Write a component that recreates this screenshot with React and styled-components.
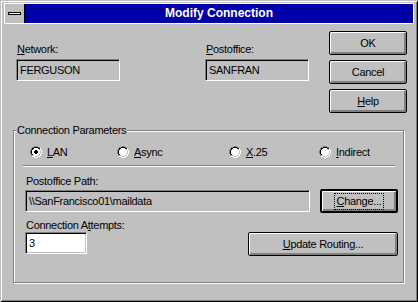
import React from "react";
import styled, { createGlobalStyle } from "styled-components";

const Global = createGlobalStyle`
  html, body { margin: 0; padding: 0; background: #c0c0c0; }
  body { font-family: "Liberation Sans", Arial, sans-serif; }
`;

const Window = styled.div`
  width: 418px;
  height: 302px;
  box-sizing: border-box;
  background: #c0c0c0;
  padding: 3px 4px 0 4px;
  box-shadow: inset 1px 1px 0 #c0c0c0, inset -1px -1px 0 #000,
    inset 2px 2px 0 #fff, inset -2px -2px 0 #808080;
  display: flex;
  flex-direction: column;
  font-family: "Liberation Sans", Arial, sans-serif;
  font-size: 11px;
  letter-spacing: -0.3px;
  color: #000;
`;

const TitleBar = styled.div`
  display: flex;
  height: 21px;
  box-sizing: border-box;
  border: 1px solid #fff;
`;

const SysMenu = styled.div`
  width: 19px;
  background: #c0c0c0;
  border-right: 1px solid #000;
  display: flex;
  align-items: center;
  justify-content: center;
`;

const SysDash = styled.div`
  width: 13px;
  height: 3px;
  box-sizing: border-box;
  border: 1px solid #000;
  background: #fff;
`;

const Title = styled.div`
  flex: 1;
  background: #0000a8;
  color: #fff;
  font-weight: bold;
  font-size: 12px;
  letter-spacing: 0;
  line-height: 19px;
  text-align: center;
`;

const Body = styled.div`
  display: flex;
  flex-direction: column;
`;

const TopSection = styled.div`
  display: flex;
  align-items: flex-start;
  padding-left: 12px;
`;

const FieldsRow = styled.div`
  display: flex;
  gap: 85px;
  margin-top: 19px;
`;

const FieldGroup = styled.div`
  display: flex;
  flex-direction: column;
`;

const Label = styled.div`
  line-height: 13px;
  padding-left: 1px;
  margin-top: ${(p) => p.$top || 0}px;
  margin-bottom: ${(p) => p.$gap || 0}px;
  white-space: nowrap;
`;

const Field = styled.div`
  width: ${(p) => p.$w}px;
  height: 22px;
  box-sizing: border-box;
  border: 1px solid;
  border-color: #808080 #fff #fff #808080;
  box-shadow: inset 1px 1px 0 #000, inset -1px -1px 0 #c0c0c0;
  background: ${(p) => (p.$white ? "#fff" : "#c0c0c0")};
  padding-left: 3px;
  line-height: 20px;
  white-space: nowrap;
  overflow: hidden;
`;

const ButtonColumn = styled.div`
  display: flex;
  flex-direction: column;
  gap: 5px;
  margin: 7px 0 0 20px;
`;

const Button = styled.button`
  width: ${(p) => p.$w || 78}px;
  height: 24px;
  box-sizing: border-box;
  border: ${(p) => (p.$default ? 2 : 1)}px solid #000;
  border-radius: 2px;
  background: #c0c0c0;
  box-shadow: inset 1px 1px 0 #fff, inset -1px -1px 0 #808080,
    inset -2px -2px 0 #808080;
  font: inherit;
  letter-spacing: inherit;
  color: #000;
  padding: 0;
  display: flex;
  align-items: center;
  justify-content: center;
  flex-shrink: 0;
`;

const Focus = styled.span`
  outline: 1px dotted #000;
  outline-offset: 0;
  padding: 1px 1px;
  line-height: 13px;
`;

const U = styled.span`
  text-decoration: underline;
  text-underline-offset: 1px;
`;

const Group = styled.fieldset`
  margin: 11px 0 0 9px;
  padding: 0 0 26px 0;
  width: 391px;
  box-sizing: border-box;
  border: 1px solid #808080;
  box-shadow: 1px 1px 0 #fff, inset 1px 1px 0 #fff;
  min-inline-size: auto;
`;

const Legend = styled.legend`
  margin-left: 2px;
  padding: 0 1px;
  line-height: 13px;
  background: #c0c0c0;
`;

const RadioRow = styled.div`
  display: flex;
  align-items: center;
  height: 16px;
  margin-top: 7px;
  padding-left: 16px;
`;

const RadioOption = styled.div`
  display: flex;
  align-items: center;
  gap: 5px;
  width: ${(p) => (p.$w ? `${p.$w}px` : "auto")};
  line-height: 13px;
`;

const Separator = styled.div`
  margin: 5px 0 0 9px;
  width: 372px;
  height: 2px;
  box-sizing: border-box;
  border-top: 1px solid #808080;
  border-bottom: 1px solid #fff;
`;

const Section = styled.div`
  display: flex;
  flex-direction: column;
  padding-left: 11px;
`;

const PathRow = styled.div`
  display: flex;
  align-items: center;
  gap: 10px;
  margin-top: 1px;
`;

const AttemptsRow = styled.div`
  display: flex;
  align-items: flex-start;
  justify-content: space-between;
  width: 373px;
`;

const RADIO = [
  "....DDDD....",
  "..DDKKKKDD..",
  ".DKKWWWWKKH.",
  ".DKWWWWWWLH.",
  "DKWWWWWWWWLH",
  "DKWWWWWWWWLH",
  "DKWWWWWWWWLH",
  "DKWWWWWWWWLH",
  ".DKWWWWWWLH.",
  ".DLLWWWWLLH.",
  "..HHLLLLHH..",
  "....HHHH....",
];
const DOT = ["............", "............", "............", "............",
  ".....XX.....", "....XXXX....", "....XXXX....", ".....XX.....",
  "............", "............", "............", "............"];
const COLORS = { D: "#808080", K: "#000", W: "#fff", L: "#c0c0c0", H: "#fff", X: "#000" };

function pixelRects(grid) {
  const out = [];
  grid.forEach((row, y) => {
    let x = 0;
    while (x < row.length) {
      const c = row[x];
      if (c === ".") { x++; continue; }
      let e = x;
      while (e < row.length && row[e] === c) e++;
      out.push(<rect key={`${y}-${x}`} x={x} y={y} width={e - x} height={1} fill={COLORS[c]} />);
      x = e;
    }
  });
  return out;
}

function Radio({ checked }) {
  return (
    <svg width="12" height="12" viewBox="0 0 12 12" shapeRendering="crispEdges">
      {pixelRects(RADIO)}
      {checked && pixelRects(DOT)}
    </svg>
  );
}

const radios = [
  { pre: "", u: "L", post: "AN", w: 87, checked: true },
  { pre: "", u: "A", post: "sync", w: 112 },
  { pre: "", u: "X", post: ".25", w: 90 },
  { pre: "", u: "I", post: "ndirect" },
];

export default function App() {
  return (
    <>
      <Global />
      <Window>
        <TitleBar>
          <SysMenu>
            <SysDash />
          </SysMenu>
          <Title>Modify Connection</Title>
        </TitleBar>
        <Body>
          <TopSection>
            <FieldsRow>
              <FieldGroup>
                <Label $gap={3}>
                  <U>N</U>etwork:
                </Label>
                <Field $w={104}>FERGUSON</Field>
              </FieldGroup>
              <FieldGroup>
                <Label $gap={3}>
                  <U>P</U>ostoffice:
                </Label>
                <Field $w={104}>SANFRAN</Field>
              </FieldGroup>
            </FieldsRow>
            <ButtonColumn>
              <Button>OK</Button>
              <Button>Cancel</Button>
              <Button>
                <span>
                  <U>H</U>elp
                </span>
              </Button>
            </ButtonColumn>
          </TopSection>
          <Group>
            <Legend>Connection Parameters</Legend>
            <RadioRow>
              {radios.map((r, i) => (
                <RadioOption key={i} $w={r.w}>
                  <Radio checked={r.checked} />
                  <span>
                    <U>{r.u}</U>
                    {r.post}
                  </span>
                </RadioOption>
              ))}
            </RadioRow>
            <Separator />
            <Section>
              <Label $top={8}>Postoffice Path:</Label>
              <PathRow>
                <Field $w={285}>\\SanFrancisco01\maildata</Field>
                <Button $default>
                  <Focus>
                    <U>C</U>hange...
                  </Focus>
                </Button>
              </PathRow>
              <Label $top={6}>
                Connection A<U>t</U>tempts:
              </Label>
              <AttemptsRow>
                <Field $w={62} $white>
                  3
                </Field>
                <Button $w={150}>
                  <span>
                    <U>U</U>pdate Routing...
                  </span>
                </Button>
              </AttemptsRow>
            </Section>
          </Group>
        </Body>
      </Window>
    </>
  );
}
